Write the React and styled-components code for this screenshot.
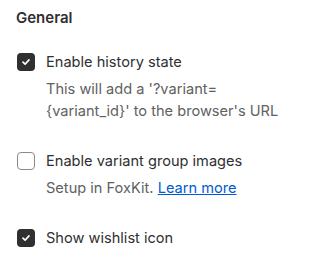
import React, { useState } from "react";
import styled, { createGlobalStyle } from "styled-components";

const GlobalStyle = createGlobalStyle`
  body {
    margin: 0;
    background: #ffffff;
    font-family: Inter, "Noto Sans", sans-serif;
  }
`;

const options = [
  {
    id: "history",
    label: "Enable history state",
    checked: true,
    help: "This will add a '?variant={variant_id}' to the browser's URL",
  },
  {
    id: "groupImages",
    label: "Enable variant group images",
    checked: false,
    help: "Setup in FoxKit.",
    link: "Learn more",
  },
  {
    id: "wishlist",
    label: "Show wishlist icon",
    checked: true,
  },
];

const App = () => {
  const [values, setValues] = useState(
    Object.fromEntries(options.map((o) => [o.id, o.checked]))
  );

  const toggle = (id) => setValues({ ...values, [id]: !values[id] });

  return (
    <Container>
      <GlobalStyle />
      <Heading>General</Heading>
      <List>
        {options.map((item) => (
          <Item key={item.id}>
            <Row onClick={() => toggle(item.id)}>
              <Box $checked={values[item.id]}>
                {values[item.id] && (
                  <svg width="10" height="10" viewBox="0 0 10 10">
                    <polyline
                      points="2,5.2 4.1,7.2 8,2.9"
                      fill="none"
                      stroke="#fff"
                      strokeWidth="1.7"
                      strokeLinecap="round"
                      strokeLinejoin="round"
                    />
                  </svg>
                )}
              </Box>
              <Label>{item.label}</Label>
            </Row>
            {item.help && (
              <Help>
                {item.help}
                {item.link && (
                  <>
                    {" "}
                    <Link href="#">{item.link}</Link>
                  </>
                )}
              </Help>
            )}
          </Item>
        ))}
      </List>
    </Container>
  );
};

const Container = styled.div`
  width: 313px;
  height: 268px;
  box-sizing: border-box;
  padding: 7.5px 16px 0 16px;
`;

const Heading = styled.h2`
  margin: 0;
  font-size: 15px;
  line-height: 20px;
  font-weight: 600;
  color: #303030;
`;

const List = styled.div`
  margin-top: 24px;
  display: flex;
  flex-direction: column;
  gap: 28.5px;
`;

const Item = styled.div`
  display: flex;
  flex-direction: column;
`;

const Row = styled.label`
  display: flex;
  align-items: center;
  gap: 11px;
  cursor: pointer;
`;

const Box = styled.span`
  width: 18px;
  height: 18px;
  box-sizing: border-box;
  margin-left: 1px;
  border-radius: 4px;
  display: flex;
  align-items: center;
  justify-content: center;
  background: ${(p) => (p.$checked ? "#303030" : "#ffffff")};
  border: ${(p) => (p.$checked ? "none" : "1px solid #8a8a8a")};
`;

const Label = styled.span`
  font-size: 14.6px;
  line-height: 20px;
  color: #303030;
`;

const Help = styled.div`
  margin: 6.5px 0 0 30px;
  font-size: 14.6px;
  line-height: 22px;
  color: #616161;
`;

const Link = styled.a`
  color: #005bd3;
  text-decoration: underline;
`;

export default App;
